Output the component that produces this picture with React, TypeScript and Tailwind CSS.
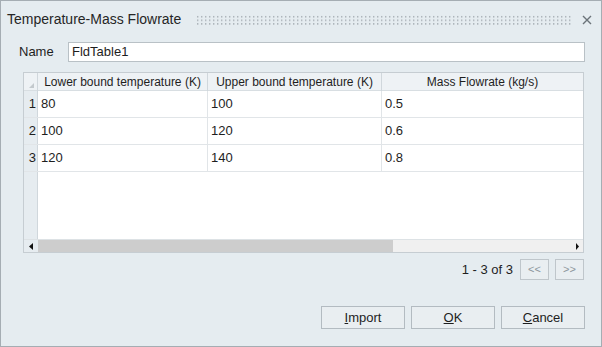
import React from "react";

const rows = [
  ["80", "100", "0.5"],
  ["100", "120", "0.6"],
  ["120", "140", "0.8"],
];

const Grip = () => (
  <svg className="flex-1 h-[11px]" preserveAspectRatio="none">
    <defs>
      <pattern id="dots" width="4" height="3.6" patternUnits="userSpaceOnUse">
        <rect x="1" y="1" width="1.4" height="1.4" fill="#a4acb2" />
      </pattern>
    </defs>
    <rect x="0" y="0" width="100%" height="11" fill="url(#dots)" />
  </svg>
);

const DlgButton = ({ first, rest }: { first: string; rest: string }) => (
  <button className="w-[84px] h-[23px] border border-[#b3bbc1] bg-[#e9eef1] text-[13px] text-[#1e1e1e]">
    <span className="underline">{first}</span>
    {rest}
  </button>
);

const App = () => {
  return (
    <div
      className="w-[602px] h-[347px] border border-[#a5adb3] bg-[#e5ecf0] flex flex-col text-[#1e1e1e]"
      style={{ fontFamily: '"Liberation Sans", Arial, sans-serif' }}
    >
      {/* Title bar */}
      <div className="h-[36px] flex items-center pl-[6px] pr-[9px] pt-[1px]">
        <span className="text-[14px] text-[#262626]">Temperature-Mass Flowrate</span>
        <div className="flex-1 flex ml-[15px] mr-[10px] pt-[1px]">
          <Grip />
        </div>
        <svg width="10" height="10" viewBox="0 0 10 10" className="mt-[1px]">
          <path d="M1 1 L9 9 M9 1 L1 9" stroke="#6b7379" strokeWidth="1.4" />
        </svg>
      </div>

      {/* Name */}
      <div className="flex items-center mt-[5px] pl-[18px] pr-[16px]">
        <span className="w-[49px] text-[13px]">Name</span>
        <div className="flex-1 h-[20px] border border-[#b9c1c6] bg-white flex items-center pl-[3px] text-[13px]">
          FldTable1
        </div>
      </div>

      {/* Table */}
      <div className="mt-[10px] ml-[22px] mr-[17px] h-[181px] border border-[#c6cdd2] bg-white flex flex-col text-[12px]">
        <div className="grid grid-cols-[14px_170px_174px_1fr] h-[18px] bg-[#eef2f5] border-b border-[#d8dee2]">
          <div className="border-r border-[#d0d7dc] flex items-end justify-end pr-[3px] pb-[3px]">
            <svg width="5" height="5" viewBox="0 0 5 5">
              <path d="M5 0 L5 5 L0 5 Z" fill="#c3c9cd" />
            </svg>
          </div>
          <div className="border-r border-[#d0d7dc] flex items-center justify-center">Lower bound temperature (K)</div>
          <div className="border-r border-[#d0d7dc] flex items-center justify-center">Upper bound temperature (K)</div>
          <div className="flex items-center justify-center">Mass Flowrate (kg/s)</div>
        </div>
        {rows.map((r, i) => (
          <div
            key={i}
            className="grid grid-cols-[14px_170px_174px_1fr] h-[27px] border-b border-[#e1e5e8] text-[13px]"
          >
            <div className="bg-[#e6ecf0] border-r border-[#d0d7dc] flex items-center justify-end pr-[1px]">{i + 1}</div>
            <div className="border-r border-[#e1e5e8] flex items-center pl-[3px]">{r[0]}</div>
            <div className="border-r border-[#e1e5e8] flex items-center pl-[3px]">{r[1]}</div>
            <div className="flex items-center pl-[3px]">{r[2]}</div>
          </div>
        ))}
        <div className="flex-1 flex">
          <div className="w-[14px] bg-[#e6ecf0] border-r border-[#d0d7dc]" />
          <div className="flex-1" />
        </div>
        {/* Horizontal scrollbar */}
        <div className="h-[13px] flex border-t border-[#dde2e5]">
          <div className="w-[14px] bg-[#e6ecf0] flex items-center justify-center">
            <svg width="6" height="7" viewBox="0 0 6 7">
              <path d="M5 0 L1 3.5 L5 7 Z" fill="#111" />
            </svg>
          </div>
          <div className="w-[355px] bg-[#cdcdcd]" />
          <div className="flex-1 bg-[#f0f0f0]" />
          <div className="w-[12px] bg-[#f0f0f0] flex items-center justify-center">
            <svg width="5" height="7" viewBox="0 0 5 7">
              <path d="M1 0 L4 3.5 L1 7 Z" fill="#111" />
            </svg>
          </div>
        </div>
      </div>

      {/* Pagination */}
      <div className="flex items-center justify-end gap-[6px] mt-[6px] mr-[17px] text-[13px]">
        <span className="mr-[1px]">1 - 3 of 3</span>
        <div className="w-[29px] h-[21px] border border-[#bfc6cb] bg-[#e9eef1] flex items-center justify-center text-[11px] text-[#8e979d]">
          &lt;&lt;
        </div>
        <div className="w-[29px] h-[21px] border border-[#bfc6cb] bg-[#e9eef1] flex items-center justify-center text-[11px] text-[#8e979d]">
          &gt;&gt;
        </div>
      </div>

      {/* Buttons */}
      <div className="flex justify-end gap-[6px] mt-[26px] mr-[16px]">
        <DlgButton first="I" rest="mport" />
        <DlgButton first="O" rest="K" />
        <DlgButton first="C" rest="ancel" />
      </div>
    </div>
  );
};

export default App;
